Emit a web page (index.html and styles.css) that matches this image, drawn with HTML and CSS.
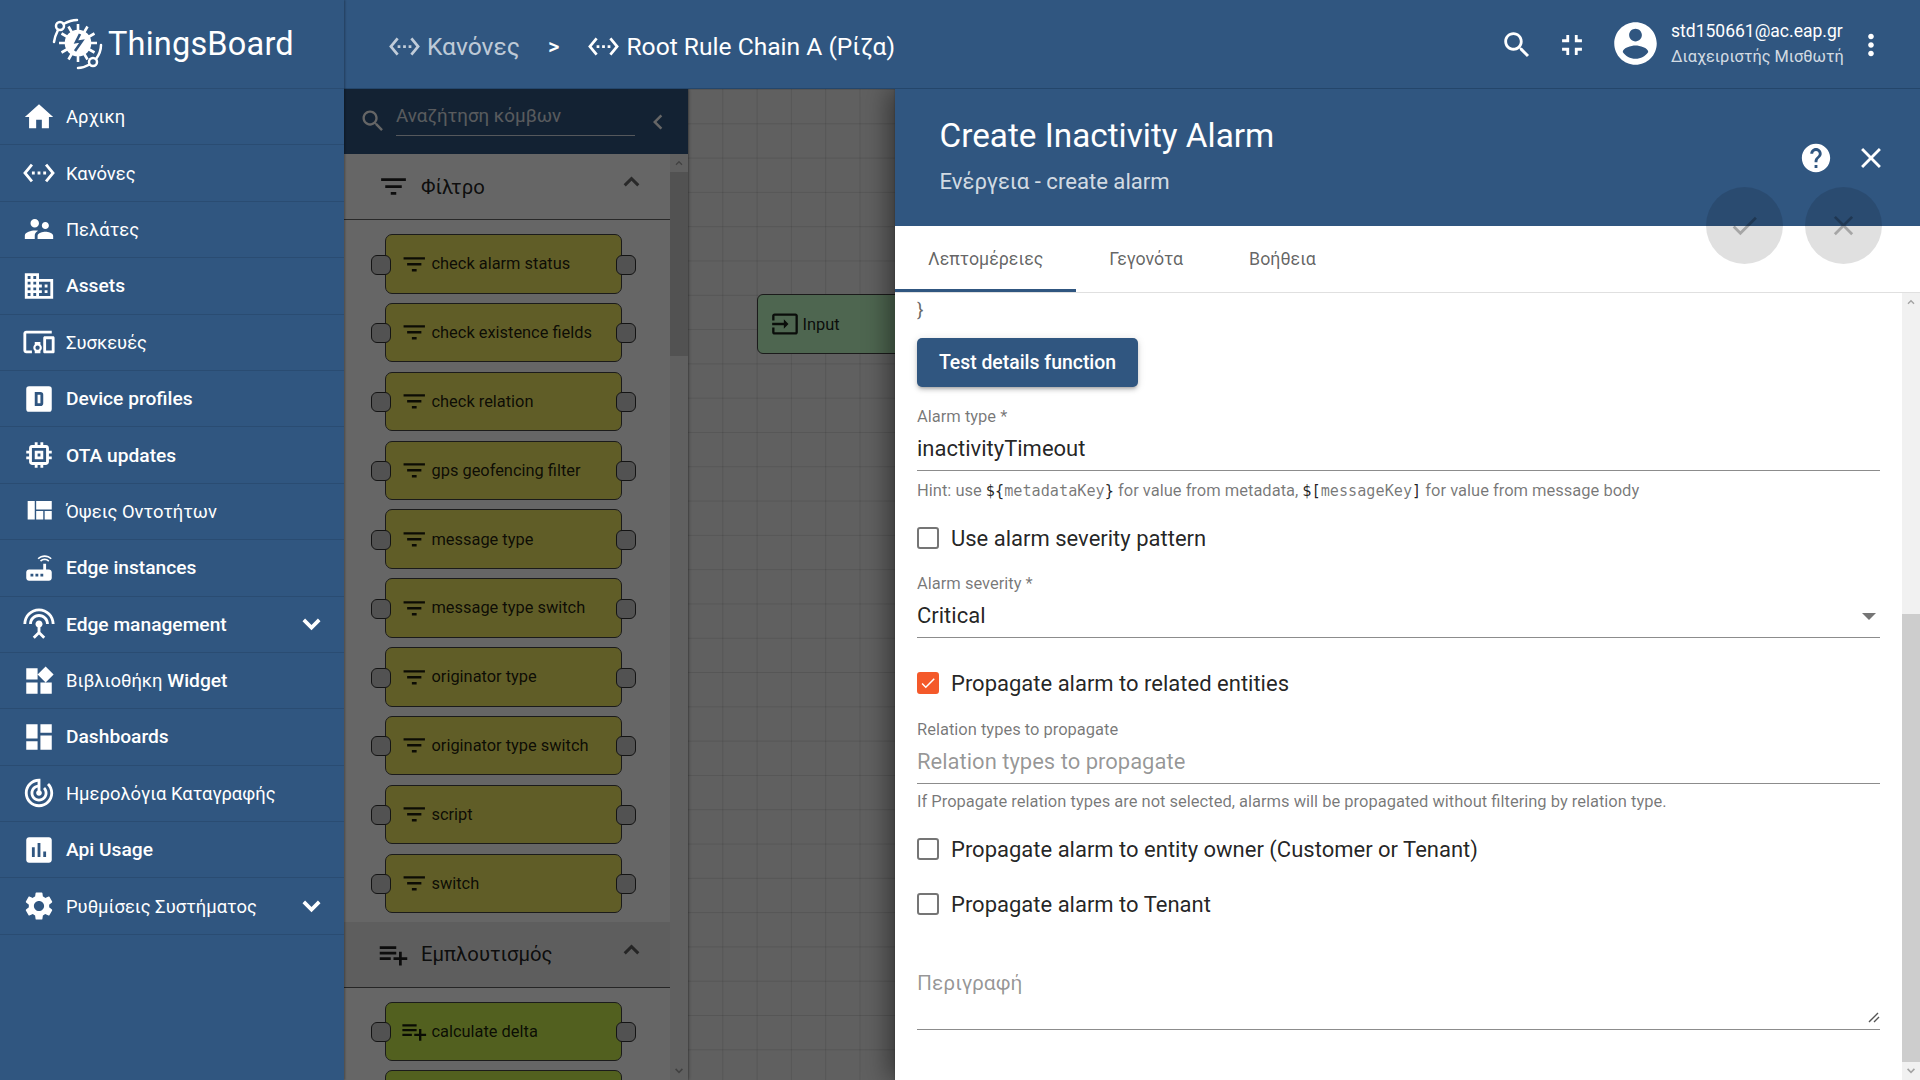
FILE: index.html
```html
<!DOCTYPE html>
<html lang="en">
<head>
  <meta charset="UTF-8">
  <title>ThingsBoard | Root Rule Chain A</title>
  <link rel="stylesheet" href="styles.css">
</head>
<body>
  <svg class="sprite" xmlns="http://www.w3.org/2000/svg">
    <symbol id="i-home" viewBox="0 0 24 24"><path d="M10 20v-6h4v6h5v-8h3L12 3 2 12h3v8z"/></symbol>
    <symbol id="i-search" viewBox="0 0 24 24"><path d="M15.5 14h-.79l-.28-.27C15.41 12.59 16 11.11 16 9.5 16 5.91 13.09 3 9.5 3S3 5.91 3 9.5 5.91 16 9.5 16c1.61 0 3.09-.59 4.23-1.57l.27.28v.79l5 4.99L20.49 19l-4.99-5zm-6 0C7.01 14 5 11.99 5 9.5S7.01 5 9.5 5 14 7.01 14 9.5 11.99 14 9.5 14z"/></symbol>
    <symbol id="i-rules" viewBox="0 0 24 24"><path d="M7.77 6.76L6.23 5.48.82 12l5.41 6.52 1.54-1.28L3.42 12l4.35-5.24zM7 13h2v-2H7v2zm10-2h-2v2h2v-2zm-6 2h2v-2h-2v2zm6.77-7.52l-1.54 1.28L20.58 12l-4.35 5.24 1.54 1.28L23.18 12l-5.41-6.52z"/></symbol>
    <symbol id="i-customers" viewBox="0 0 24 24"><path d="M16.5 12c1.38 0 2.49-1.12 2.49-2.5S17.88 7 16.5 7C15.12 7 14 8.12 14 9.5s1.12 2.5 2.5 2.5zM9 11c1.66 0 2.99-1.34 2.99-3S10.66 5 9 5C7.34 5 6 6.34 6 8s1.34 3 3 3zm7.5 3c-1.83 0-5.5.92-5.5 2.75V19h11v-2.25c0-1.83-3.67-2.75-5.5-2.75zM9 13c-2.33 0-7 1.17-7 3.5V19h7v-2.25c0-.85.33-2.34 2.37-3.47C10.5 13.1 9.66 13 9 13z"/></symbol>
    <symbol id="i-domain" viewBox="0 0 24 24"><path d="M12 7V3H2v18h20V7H12zM6 19H4v-2h2v2zm0-4H4v-2h2v2zm0-4H4V9h2v2zm0-4H4V5h2v2zm4 12H8v-2h2v2zm0-4H8v-2h2v2zm0-4H8V9h2v2zm0-4H8V5h2v2zm10 12h-8v-2h2v-2h-2v-2h2v-2h-2V9h8v10zm-2-8h-2v2h2v-2zm0 4h-2v2h2v-2z"/></symbol>
    <symbol id="i-devices" viewBox="0 0 24 24"><path d="M3 6h18V4H3c-1.1 0-2 .9-2 2v12c0 1.1.9 2 2 2h4v-2H3V6zm10 6H9v1.78c-.61.55-1 1.33-1 2.22s.39 1.67 1 2.22V20h4v-1.78c.61-.55 1-1.34 1-2.22s-.39-1.67-1-2.22V12zm-2 5.5c-.83 0-1.5-.67-1.5-1.5s.67-1.5 1.5-1.5 1.5.67 1.5 1.5-.67 1.5-1.5 1.5zM22 8h-6c-.5 0-1 .5-1 1v10c0 .5.5 1 1 1h6c.5 0 1-.5 1-1V9c0-.5-.5-1-1-1zm-1 10h-4v-8h4v8z"/></symbol>
    <symbol id="i-profile" viewBox="0 0 24 24"><path fill-rule="evenodd" d="M5 3h14a2 2 0 0 1 2 2v14a2 2 0 0 1-2 2H5a2 2 0 0 1-2-2V5a2 2 0 0 1 2-2zm4 4v10h4a2 2 0 0 0 2-2V9a2 2 0 0 0-2-2H9zm2 2h2v6h-2V9z"/></symbol>
    <symbol id="i-memory" viewBox="0 0 24 24"><path d="M15 9H9v6h6V9zm-2 4h-2v-2h2v2zm8-2V9h-2V7c0-1.1-.9-2-2-2h-2V3h-2v2h-2V3H9v2H7c-1.1 0-2 .9-2 2v2H3v2h2v2H3v2h2v2c0 1.1.9 2 2 2h2v2h2v-2h2v2h2v-2h2c1.1 0 2-.9 2-2v-2h2v-2h-2v-2h2zm-4 6H7V7h10v10z"/></symbol>
    <symbol id="i-quilt" viewBox="0 0 24 24"><path d="M10 18h5v-6h-5v6zm-6 0h5V5H4v13zm12 0h5v-6h-5v6zM10 5v6h11V5H10z"/></symbol>
    <symbol id="i-router" viewBox="0 0 24 24"><path d="M20.2 5.9l.8-.8C19.6 3.7 17.8 3 16 3s-3.6.7-5 2.1l.8.8C13 4.8 14.5 4.2 16 4.2s3 .6 4.2 1.7zm-.9.8c-.9-.9-2.1-1.4-3.3-1.4s-2.4.5-3.3 1.4l.8.8c.7-.7 1.6-1 2.5-1 .9 0 1.8.3 2.5 1l.8-.8zM19 13h-2V9h-2v4H5c-1.1 0-2 .9-2 2v4c0 1.1.9 2 2 2h14c1.1 0 2-.9 2-2v-4c0-1.1-.9-2-2-2zM8 18H6v-2h2v2zm3.5 0h-2v-2h2v2zm3.5 0h-2v-2h2v2z"/></symbol>
    <symbol id="i-antenna" viewBox="0 0 24 24"><path d="M12 5c-3.87 0-7 3.13-7 7h2c0-2.76 2.24-5 5-5s5 2.24 5 5h2c0-3.87-3.13-7-7-7zm1 9.29c.88-.39 1.5-1.26 1.5-2.29 0-1.38-1.12-2.5-2.5-2.5S9.5 10.62 9.5 12c0 1.02.62 1.9 1.5 2.29v3.3L7.59 21 9 22.41l3-3 3 3L16.41 21 13 17.59v-3.3zM12 1C5.93 1 1 5.93 1 12h2c0-4.97 4.03-9 9-9s9 4.03 9 9h2c0-6.07-4.93-11-11-11z"/></symbol>
    <symbol id="i-widgets" viewBox="0 0 24 24"><path d="M13 13v8h8v-8h-8zM3 21h8v-8H3v8zM3 3v8h8V3H3zm13.66-1.31L11 7.34 16.66 13l5.66-5.66-5.66-5.65z"/></symbol>
    <symbol id="i-dashboard" viewBox="0 0 24 24"><path d="M3 13h8V3H3v10zm0 8h8v-6H3v6zm10 0h8V11h-8v10zm0-18v6h8V3h-8z"/></symbol>
    <symbol id="i-track" viewBox="0 0 24 24"><path d="M19.07 4.93l-1.41 1.41C19.1 7.79 20 9.79 20 12c0 4.42-3.58 8-8 8s-8-3.58-8-8c0-4.08 3.05-7.44 7-7.93v2.02C8.16 6.57 6 9.03 6 12c0 3.31 2.69 6 6 6s6-2.69 6-6c0-1.66-.67-3.16-1.76-4.24l-1.41 1.41C15.55 9.9 16 10.9 16 12c0 2.21-1.79 4-4 4s-4-1.79-4-4c0-1.86 1.28-3.41 3-3.86v2.14c-.6.35-1 .98-1 1.72 0 1.1.9 2 2 2s2-.9 2-2c0-.74-.4-1.38-1-1.72V2h-1C6.48 2 2 6.48 2 12s4.48 10 10 10 10-4.48 10-10c0-2.76-1.12-5.26-2.93-7.07z"/></symbol>
    <symbol id="i-chart" viewBox="0 0 24 24"><path d="M19 3H5c-1.1 0-2 .9-2 2v14c0 1.1.9 2 2 2h14c1.1 0 2-.9 2-2V5c0-1.1-.9-2-2-2zM9 17H7v-7h2v7zm4 0h-2V7h2v10zm4 0h-2v-4h2v4z"/></symbol>
    <symbol id="i-settings" viewBox="0 0 24 24"><path d="M19.14 12.94c.04-.3.06-.61.06-.94 0-.32-.02-.64-.07-.94l2.03-1.58c.18-.14.23-.41.12-.61l-1.92-3.32c-.12-.22-.37-.29-.59-.22l-2.39.96c-.5-.38-1.03-.7-1.62-.94l-.36-2.54c-.04-.24-.24-.41-.48-.41h-3.84c-.24 0-.43.17-.47.41l-.36 2.54c-.59.24-1.13.57-1.62.94l-2.39-.96c-.22-.08-.47 0-.59.22L2.74 8.87c-.12.21-.08.47.12.61l2.03 1.58c-.05.3-.09.63-.09.94s.02.64.07.94l-2.03 1.58c-.18.14-.23.41-.12.61l1.92 3.32c.12.22.37.29.59.22l2.39-.96c.5.38 1.03.7 1.62.94l.36 2.54c.05.24.24.41.48.41h3.84c.24 0 .44-.17.47-.41l.36-2.54c.59-.24 1.13-.56 1.62-.94l2.39.96c.22.08.47 0 .59-.22l1.92-3.32c.12-.22.07-.47-.12-.61l-2.01-1.58zM12 15.6c-1.98 0-3.6-1.62-3.6-3.6s1.62-3.6 3.6-3.6 3.6 1.62 3.6 3.6-1.62 3.6-3.6 3.6z"/></symbol>
    <symbol id="i-fullscreen-exit" viewBox="0 0 24 24"><path d="M5 16h3v3h2v-5H5v2zm3-8H5v2h5V5H8v3zm6 11h2v-3h3v-2h-5v5zm2-11V5h-2v5h5V8h-3z"/></symbol>
    <symbol id="i-account" viewBox="0 0 24 24"><path d="M12 2C6.48 2 2 6.48 2 12s4.48 10 10 10 10-4.48 10-10S17.52 2 12 2zm0 3c1.66 0 3 1.34 3 3s-1.34 3-3 3-3-1.34-3-3 1.34-3 3-3zm0 14.2c-2.5 0-4.71-1.28-6-3.22.03-1.99 4-3.08 6-3.08 1.99 0 5.97 1.09 6 3.08-1.29 1.94-3.5 3.22-6 3.22z"/></symbol>
    <symbol id="i-more" viewBox="0 0 24 24"><path d="M12 8c1.1 0 2-.9 2-2s-.9-2-2-2-2 .9-2 2 .9 2 2 2zm0 2c-1.1 0-2 .9-2 2s.9 2 2 2 2-.9 2-2-.9-2-2-2zm0 6c-1.1 0-2 .9-2 2s.9 2 2 2 2-.9 2-2-.9-2-2-2z"/></symbol>
    <symbol id="i-help" viewBox="0 0 24 24"><path d="M12 2C6.48 2 2 6.48 2 12s4.48 10 10 10 10-4.48 10-10S17.52 2 12 2zm1 17h-2v-2h2v2zm2.07-7.75l-.9.92C13.45 12.9 13 13.5 13 15h-2v-.5c0-1.1.45-2.1 1.17-2.83l1.24-1.26c.37-.36.59-.86.59-1.41 0-1.1-.9-2-2-2s-2 .9-2 2H8c0-2.21 1.79-4 4-4s4 1.79 4 4c0 .88-.36 1.68-.93 2.25z"/></symbol>
    <symbol id="i-close" viewBox="0 0 24 24"><path d="M19 6.41L17.59 5 12 10.59 6.41 5 5 6.41 10.59 12 5 17.59 6.41 19 12 13.41 17.59 19 19 17.59 13.41 12z"/></symbol>
    <symbol id="i-check" viewBox="0 0 24 24"><path d="M9 16.17L4.83 12l-1.42 1.41L9 19 21 7l-1.41-1.41z"/></symbol>
    <symbol id="i-filter" viewBox="0 0 24 24"><path d="M10 18h4v-2h-4v2zM3 6v2h18V6H3zm3 7h12v-2H6v2z"/></symbol>
    <symbol id="i-playlist" viewBox="0 0 24 24"><path d="M14 10H2v2h12v-2zm0-4H2v2h12V6zm4 8v-4h-2v4h-4v2h4v4h2v-4h4v-2h-4zM2 16h8v-2H2v2z"/></symbol>
    <symbol id="i-input" viewBox="0 0 24 24"><path d="M21 3.01H3c-1.1 0-2 .9-2 2V9h2V4.99h18v14.03H3V15H1v4.01c0 1.1.9 1.98 2 1.98h18c1.1 0 2-.88 2-1.98v-14c0-1.11-.9-2-2-2zM11 16l4-4-4-4v3H1v2h10v3z"/></symbol>
    <symbol id="i-less" viewBox="0 0 24 24"><path d="M12 7.5l-7 7 1.9 1.9 5.1-5.1 5.1 5.1 1.9-1.9z"/></symbol>
    <symbol id="i-down" viewBox="0 0 24 24"><path d="M12 17l-8-8 2.3-2.3 5.7 5.7 5.7-5.7L20 9z"/></symbol>
    <symbol id="i-back" viewBox="0 0 24 24"><path d="M15.41 7.41L14 6l-6 6 6 6 1.41-1.41L10.83 12z"/></symbol>
  </svg>

  <div class="app">
    <aside class="sidenav">
      <div class="logo">
        <svg class="logo-mark" viewBox="0 0 60 60">
          <g class="logo-lines">
            <circle cx="12" cy="12" r="4"/>
            <path d="M15.5 10C20 7.500 24 6 29 6M10 16C8 20 6.500 24 6 28"/>
            <circle cx="45" cy="48" r="4"/>
            <path d="M41.500 50.500C38 52.500 34 54 30 54M48 45C51 41 53 36 53 31"/>
          </g>
          <g class="logo-gear">
            <circle cx="30" cy="29" r="12"/>
            <path d="M30 10v38M11 29h38M20.500 12.500l19 33M39.500 12.500l-19 33M13.500 19.500l33 19M46.500 19.500l-33 19"/>
          </g>
          <path class="logo-bolt" d="M32 20l-4 8 6-1-7 10"/>
        </svg>
        <span class="logo-text">ThingsBoard</span>
      </div>
      <nav>
        <a class="nav-item"><svg class="nav-icon"><use href="#i-home"/></svg><span class="gr">Αρχικη</span></a>
        <a class="nav-item"><svg class="nav-icon"><use href="#i-rules"/></svg><span class="gr">Κανόνες</span></a>
        <a class="nav-item"><svg class="nav-icon"><use href="#i-customers"/></svg><span class="gr">Πελάτες</span></a>
        <a class="nav-item"><svg class="nav-icon"><use href="#i-domain"/></svg><span>Assets</span></a>
        <a class="nav-item"><svg class="nav-icon"><use href="#i-devices"/></svg><span class="gr">Συσκευές</span></a>
        <a class="nav-item"><svg class="nav-icon"><use href="#i-profile"/></svg><span>Device profiles</span></a>
        <a class="nav-item"><svg class="nav-icon"><use href="#i-memory"/></svg><span>OTA updates</span></a>
        <a class="nav-item"><svg class="nav-icon"><use href="#i-quilt"/></svg><span class="gr">Όψεις Οντοτήτων</span></a>
        <a class="nav-item"><svg class="nav-icon"><use href="#i-router"/></svg><span>Edge instances</span></a>
        <a class="nav-item"><svg class="nav-icon"><use href="#i-antenna"/></svg><span>Edge management</span><svg class="nav-arrow"><use href="#i-down"/></svg></a>
        <a class="nav-item"><svg class="nav-icon"><use href="#i-widgets"/></svg><span><span class="gr">Βιβλιοθήκη</span> Widget</span></a>
        <a class="nav-item"><svg class="nav-icon"><use href="#i-dashboard"/></svg><span>Dashboards</span></a>
        <a class="nav-item"><svg class="nav-icon"><use href="#i-track"/></svg><span class="gr">Ημερολόγια Καταγραφής</span></a>
        <a class="nav-item"><svg class="nav-icon"><use href="#i-chart"/></svg><span>Api Usage</span></a>
        <a class="nav-item"><svg class="nav-icon"><use href="#i-settings"/></svg><span class="gr">Ρυθμίσεις Συστήματος</span><svg class="nav-arrow"><use href="#i-down"/></svg></a>
      </nav>
    </aside>

    <div class="main">
      <header class="toolbar">
        <div class="crumbs">
          <svg class="crumb-icon crumb-dim"><use href="#i-rules"/></svg>
          <span class="crumb-text crumb-dim">Κανόνες</span>
          <span class="crumb-sep">&gt;</span>
          <svg class="crumb-icon"><use href="#i-rules"/></svg>
          <span class="crumb-text">Root Rule Chain A (Ρίζα)</span>
        </div>
        <div class="toolbar-actions">
          <svg class="tool-icon"><use href="#i-search"/></svg>
          <svg class="tool-icon tool-fullscreen"><use href="#i-fullscreen-exit"/></svg>
          <svg class="avatar"><use href="#i-account"/></svg>
          <div class="user">
            <div class="user-name">std150661@ac.eap.gr</div>
            <div class="user-role">Διαχειριστής Μισθωτή</div>
          </div>
          <svg class="tool-icon"><use href="#i-more"/></svg>
        </div>
      </header>

      <div class="workspace">
        <section class="library">
          <div class="lib-search">
            <svg class="lib-search-icon"><use href="#i-search"/></svg>
            <div class="lib-search-input">Αναζήτηση κόμβων</div>
            <svg class="lib-back"><use href="#i-back"/></svg>
          </div>
          <div class="lib-body">
            <div class="lib-list">
              <div class="lib-head">
                <svg class="lib-head-icon"><use href="#i-filter"/></svg>
                <span class="lib-head-title">Φίλτρο</span>
                <svg class="lib-head-arrow"><use href="#i-less"/></svg>
              </div>
              <div class="lib-nodes">
                <div class="node node-filter"><i class="port port-l"></i><svg class="node-icon"><use href="#i-filter"/></svg><span>check alarm status</span><i class="port port-r"></i></div>
                <div class="node node-filter"><i class="port port-l"></i><svg class="node-icon"><use href="#i-filter"/></svg><span>check existence fields</span><i class="port port-r"></i></div>
                <div class="node node-filter"><i class="port port-l"></i><svg class="node-icon"><use href="#i-filter"/></svg><span>check relation</span><i class="port port-r"></i></div>
                <div class="node node-filter"><i class="port port-l"></i><svg class="node-icon"><use href="#i-filter"/></svg><span>gps geofencing filter</span><i class="port port-r"></i></div>
                <div class="node node-filter"><i class="port port-l"></i><svg class="node-icon"><use href="#i-filter"/></svg><span>message type</span><i class="port port-r"></i></div>
                <div class="node node-filter"><i class="port port-l"></i><svg class="node-icon"><use href="#i-filter"/></svg><span>message type switch</span><i class="port port-r"></i></div>
                <div class="node node-filter"><i class="port port-l"></i><svg class="node-icon"><use href="#i-filter"/></svg><span>originator type</span><i class="port port-r"></i></div>
                <div class="node node-filter"><i class="port port-l"></i><svg class="node-icon"><use href="#i-filter"/></svg><span>originator type switch</span><i class="port port-r"></i></div>
                <div class="node node-filter"><i class="port port-l"></i><svg class="node-icon"><use href="#i-filter"/></svg><span>script</span><i class="port port-r"></i></div>
                <div class="node node-filter"><i class="port port-l"></i><svg class="node-icon"><use href="#i-filter"/></svg><span>switch</span><i class="port port-r"></i></div>
              </div>
              <div class="lib-head lib-head-hover">
                <svg class="lib-head-icon"><use href="#i-playlist"/></svg>
                <span class="lib-head-title">Εμπλουτισμός</span>
                <svg class="lib-head-arrow"><use href="#i-less"/></svg>
              </div>
              <div class="lib-nodes">
                <div class="node node-enrich"><i class="port port-l"></i><svg class="node-icon"><use href="#i-playlist"/></svg><span>calculate delta</span><i class="port port-r"></i></div>
                <div class="node node-enrich"><i class="port port-l"></i><i class="port port-r"></i></div>
              </div>
            </div>
            <div class="scrollbar scrollbar-lib">
              <svg class="scroll-btn"><use href="#i-less"/></svg>
              <div class="scroll-thumb"></div>
              <div class="scroll-fill"></div>
              <svg class="scroll-btn"><use href="#i-down"/></svg>
            </div>
          </div>
        </section>

        <section class="canvas">
          <div class="canvas-node">
            <svg class="canvas-node-icon"><use href="#i-input"/></svg>
            <span>Input</span>
          </div>
        </section>

        <div class="backdrop"></div>

        <aside class="drawer">
          <div class="drawer-head">
            <h1 class="drawer-title">Create Inactivity Alarm</h1>
            <div class="drawer-sub">Ενέργεια - create alarm</div>
            <div class="drawer-tools">
              <svg class="drawer-tool"><use href="#i-help"/></svg>
              <svg class="drawer-tool"><use href="#i-close"/></svg>
            </div>
            <div class="fabs">
              <div class="fab"><svg><use href="#i-check"/></svg></div>
              <div class="fab"><svg><use href="#i-close"/></svg></div>
            </div>
          </div>
          <div class="tabs">
            <div class="tab tab-active">Λεπτομέρειες</div>
            <div class="tab">Γεγονότα</div>
            <div class="tab">Βοήθεια</div>
          </div>
          <div class="drawer-body">
            <div class="form">
              <div class="code-end">}</div>
              <button class="btn-test">Test details function</button>

              <div class="field-label mt-19">Alarm type *</div>
              <div class="field-value">inactivityTimeout</div>
              <div class="hint mt-10">Hint: use <code class="tok">$<span class="tok-key">{</span><span class="tok-var">metadataKey</span>}</code> for value from metadata, <code class="tok">$[<span class="tok-var">messageKey</span>]</code> for value from message body</div>

              <label class="check mt-26"><i class="box"></i>Use alarm severity pattern</label>

              <div class="field-label mt-24">Alarm severity *</div>
              <div class="field-value field-select">Critical<i class="select-arrow"></i></div>

              <label class="check mt-34"><i class="box box-on"><svg><use href="#i-check"/></svg></i>Propagate alarm to related entities</label>

              <div class="field-label mt-25">Relation types to propagate</div>
              <div class="field-value field-empty">Relation types to propagate</div>
              <div class="hint mt-8">If Propagate relation types are not selected, alarms will be propagated without filtering by relation type.</div>

              <label class="check mt-26"><i class="box"></i>Propagate alarm to entity owner (Customer or Tenant)</label>
              <label class="check mt-33"><i class="box"></i>Propagate alarm to Tenant</label>

              <div class="field-area">
                Περιγραφή
                <svg class="resize-grip" viewBox="0 0 12 12"><path d="M1 11L10 2M6 11l5-5"/></svg>
              </div>
            </div>
            <div class="scrollbar scrollbar-form">
              <svg class="scroll-btn"><use href="#i-less"/></svg>
              <div class="scroll-fill"></div>
              <div class="scroll-thumb"></div>
              <svg class="scroll-btn"><use href="#i-down"/></svg>
            </div>
          </div>
        </aside>
      </div>
    </div>
  </div>
</body>
</html>
```

FILE: styles.css
```css
* {
  margin: 0;
  padding: 0;
  box-sizing: border-box;
}
html, body {
  height: 100%;
  overflow: hidden;
}
body {
  font-family: Roboto, "Noto Sans", sans-serif;
  font-size: 17.5px;
  color: rgba(0,0,0,0.87);
  background: #fff;
}
svg {
  fill: currentColor;
  display: block;
  flex: none;
}
.sprite {
  display: none;
}
.app {
  display: flex;
  height: 1080px;
}

/* left menu */
.sidenav {
  width: 344px;
  flex: none;
  background: #305680;
  color: #fff;
  box-shadow: 1px 0 2px rgba(0,0,0,0.3);
  position: relative;
  z-index: 3;
}
.logo {
  height: 89px;
  display: flex;
  align-items: center;
  padding-left: 48px;
  border-bottom: 1px solid #2a4c72;
}
.logo-mark {
  width: 60px;
  height: 60px;
  fill: none;
}
.logo-lines {
  stroke: #fff;
  stroke-width: 2.5;
  stroke-linecap: round;
}
.logo-gear {
  stroke: #fff;
  fill: #fff;
  stroke-width: 2.6;
}
.logo-bolt {
  stroke: #305680;
  stroke-width: 2.6;
}
.logo-text {
  font-size: 32.5px;
  font-weight: 400;
  letter-spacing: 0.2px;
}
.nav-item {
  height: 56.4px;
  display: flex;
  align-items: center;
  padding-left: 21.5px;
  padding-right: 19.5px;
  font-size: 19.2px;
  font-weight: 500;
  border-bottom: 1px solid #2a4c72;
}
.gr {
  font-weight: 400;
  font-size: 18.4px;
}
.nav-icon {
  width: 34px;
  height: 34px;
  margin-right: 10.5px;
}
.nav-arrow {
  width: 27px;
  height: 27px;
  margin-left: auto;
}

.main {
  flex: 1;
  display: flex;
  flex-direction: column;
  min-width: 0;
}

/* top bar */
.toolbar {
  height: 89px;
  flex: none;
  background: #305680;
  color: #fff;
  display: flex;
  align-items: center;
  justify-content: space-between;
  border-bottom: 1px solid #24466b;
  padding-left: 44px;
  padding-right: 32px;
}
.crumbs {
  display: flex;
  align-items: center;
  font-size: 24.6px;
  margin-top: 4px;
}
.crumb-icon {
  width: 33px;
  height: 33px;
  margin-right: 6px;
}
.crumb-dim {
  color: rgba(255,255,255,0.7);
}
.crumb-sep {
  margin: 0 28px 0 28px;
  font-size: 22px;
  font-weight: 500;
}
.toolbar-actions {
  display: flex;
  align-items: center;
}
.tool-icon {
  width: 34px;
  height: 34px;
  margin-top: 2px;
}
.tool-fullscreen {
  margin-left: 21.5px;
}
.avatar {
  width: 51px;
  height: 51px;
  margin-left: 20.5px;
  margin-top: -2px;
}
.user {
  margin-left: 10.5px;
  font-size: 17.5px;
  line-height: 26px;
  width: 183px;
  white-space: nowrap;
}
.user-role {
  font-size: 16.35px;
  color: rgba(255,255,255,0.8);
}

/* rule chain area */
.workspace {
  flex: 1;
  position: relative;
  display: flex;
  min-height: 0;
  overflow: hidden;
}
.library {
  width: 344px;
  flex: none;
  display: flex;
  flex-direction: column;
  background: #fff;
  box-shadow: 1px 0 3px rgba(0,0,0,0.3);
  z-index: 1;
}
.lib-search {
  height: 65px;
  flex: none;
  background: #305680;
  color: #fff;
  display: flex;
  align-items: center;
  padding-left: 15px;
}
.lib-search-icon {
  width: 28px;
  height: 28px;
  margin-right: 9px;
  margin-top: -2px;
}
.lib-search-input {
  width: 239px;
  height: 40px;
  margin-top: -11px;
  font-size: 18.75px;
  line-height: 41px;
  color: rgba(255,255,255,0.85);
  border-bottom: 1px solid rgba(255,255,255,0.8);
}
.lib-back {
  width: 30px;
  height: 30px;
  margin-left: 7.5px;
}
.lib-body {
  flex: 1;
  display: flex;
  min-height: 0;
}
.lib-list {
  flex: 1;
  overflow: hidden;
  background: #fff;
}
.lib-head {
  height: 66px;
  display: flex;
  align-items: center;
  padding-left: 33px;
  border-bottom: 1px solid rgba(0,0,0,0.6);
  position: relative;
}
.lib-head-hover {
  background: rgba(0,0,0,0.08);
}
.lib-head-icon {
  width: 33px;
  height: 33px;
  margin-right: 11px;
}
.lib-head-title {
  font-size: 20.3px;
}
.lib-head-arrow {
  width: 27px;
  height: 27px;
  position: absolute;
  left: 273.5px;
  top: 14px;
  color: rgba(0,0,0,0.6);
}
.lib-nodes {
  padding: 14px 0 8.5px 41px;
  display: flex;
  flex-direction: column;
  gap: 9.35px;
}
.node {
  width: 237px;
  height: 59.5px;
  flex: none;
  border: 1px solid #444;
  border-radius: 7px;
  display: flex;
  align-items: center;
  position: relative;
  padding-left: 13.5px;
  font-size: 16.4px;
}
.node-filter {
  background: #f1e861;
}
.node-enrich {
  background: #cdf14e;
}
.node-icon {
  width: 28.5px;
  height: 28.5px;
  margin-right: 3.5px;
}
.port {
  position: absolute;
  top: 19.5px;
  width: 20px;
  height: 20px;
  background: #ccc;
  border: 1px solid #333;
  border-radius: 6px;
}
.port-l {
  left: -15px;
}
.port-r {
  right: -15px;
}
.scrollbar {
  width: 18px;
  flex: none;
  display: flex;
  flex-direction: column;
  background: #f1f1f1;
  color: #a3a3a3;
}
.scroll-btn {
  width: 18px;
  height: 18px;
  padding: 3px;
  flex: none;
}
.scroll-fill {
  flex: 1;
}
.scroll-thumb {
  background: #cdcdcd;
  flex: none;
}
.scrollbar-lib .scroll-thumb {
  height: 184px;
}
.scrollbar-form .scroll-thumb {
  height: 448px;
}
.canvas {
  flex: 1;
  background-color: #f0f0f0;
  background-image:
    linear-gradient(to right, rgba(0,0,0,0.1) 1px, transparent 1px),
    linear-gradient(to bottom, rgba(0,0,0,0.1) 1px, transparent 1px);
  background-size: 34.3px 34.3px;
  position: relative;
}
.canvas-node {
  position: absolute;
  left: 68.5px;
  top: 205px;
  width: 180px;
  height: 60px;
  background: #c4ffc8;
  border: 1px solid #444;
  border-radius: 6px;
  display: flex;
  align-items: center;
  padding-left: 13px;
  font-size: 16.4px;
}
.canvas-node-icon {
  width: 28px;
  height: 28px;
  margin-right: 4px;
}
.backdrop {
  position: absolute;
  inset: 0;
  background: rgba(0,0,0,0.6);
  z-index: 2;
}

/* details drawer */
.drawer {
  position: absolute;
  top: 0;
  right: 0;
  bottom: 0;
  width: 1025px;
  background: #fff;
  display: flex;
  flex-direction: column;
  z-index: 3;
  box-shadow: -6px 0 24px rgba(0,0,0,0.45);
}
.drawer-head {
  height: 137px;
  flex: none;
  background: #305680;
  color: #fff;
  position: relative;
  padding: 28px 0 0 44.5px;
}
.drawer-title {
  font-size: 33.3px;
  font-weight: 400;
  line-height: 38px;
}
.drawer-sub {
  font-size: 22.1px;
  line-height: 28px;
  margin-top: 12px;
  color: rgba(255,255,255,0.8);
}
.drawer-tools {
  position: absolute;
  right: 32px;
  top: 52px;
  display: flex;
  align-items: center;
  gap: 21px;
}
.drawer-tool {
  width: 34px;
  height: 34px;
}
.fabs {
  position: absolute;
  right: 38px;
  top: 98px;
  display: flex;
  gap: 22px;
  z-index: 1;
}
.fab {
  width: 77px;
  height: 77px;
  border-radius: 50%;
  background: rgba(0,0,0,0.12);
  color: rgba(0,0,0,0.26);
  display: flex;
  align-items: center;
  justify-content: center;
}
.fab svg {
  width: 33px;
  height: 33px;
}
.tabs {
  height: 67px;
  flex: none;
  display: flex;
  border-bottom: 1px solid #e0e0e0;
  font-size: 17.8px;
  color: rgba(0,0,0,0.62);
}
.tab {
  padding: 0 33px;
  line-height: 66px;
  height: 66px;
}
.tab-active {
  border-bottom: 3px solid #305680;
}
.drawer-body {
  flex: 1;
  display: flex;
  min-height: 0;
}
.form {
  flex: 1;
  padding: 5px 22px 0 22px;
  overflow: hidden;
  min-width: 0;
}
.code-end {
  font-size: 19px;
  line-height: 24px;
  color: rgba(0,0,0,0.6);
}
.btn-test {
  display: block;
  margin-top: 16px;
  width: 221px;
  height: 49px;
  border: none;
  border-radius: 5px;
  background: #305680;
  color: #fff;
  font: 500 19.4px Roboto, sans-serif;
  box-shadow: 0 3px 3px -2px rgba(0,0,0,0.2), 0 3px 4px rgba(0,0,0,0.14), 0 1px 8px rgba(0,0,0,0.12);
}
.mt-8 { margin-top: 8px; }
.mt-10 { margin-top: 10px; }
.mt-19 { margin-top: 19px; }
.mt-24 { margin-top: 24px; }
.mt-25 { margin-top: 25px; }
.mt-26 { margin-top: 26px; }
.mt-33 { margin-top: 33px; }
.mt-34 { margin-top: 34px; }
.field-label {
  font-size: 16.5px;
  line-height: 22px;
  color: rgba(0,0,0,0.54);
}
.field-value {
  margin-top: 6px;
  font-size: 22px;
  line-height: 30px;
  padding-bottom: 8px;
  border-bottom: 1px solid #8c8c8c;
  position: relative;
  box-sizing: content-box;
  height: 28px;
}
.field-empty {
  color: rgba(0,0,0,0.42);
}
.select-arrow {
  position: absolute;
  right: 4px;
  top: 12px;
  border-left: 7px solid transparent;
  border-right: 7px solid transparent;
  border-top: 7px solid #757575;
}
.hint {
  font-size: 16.5px;
  line-height: 20px;
  color: rgba(0,0,0,0.54);
}
.tok {
  font-family: "DejaVu Sans Mono", monospace;
  font-size: 15.2px;
  color: rgba(0,0,0,0.87);
}
.tok-var {
  color: rgba(0,0,0,0.54);
}
.check {
  display: flex;
  align-items: center;
  height: 22px;
  font-size: 22px;
}
.box {
  width: 22px;
  height: 22px;
  flex: none;
  border: 2px solid rgba(0,0,0,0.54);
  border-radius: 3px;
  margin-right: 12px;
}
.box-on {
  background: #f4592a;
  border-color: #f4592a;
  color: #fff;
}
.box-on svg {
  width: 18px;
  height: 18px;
}
.field-area {
  margin-top: 54px;
  height: 61px;
  font-size: 21px;
  line-height: 28px;
  color: rgba(0,0,0,0.42);
  border-bottom: 1px solid #8c8c8c;
  position: relative;
}
.resize-grip {
  position: absolute;
  right: 0;
  bottom: 6px;
  width: 12px;
  height: 12px;
  fill: none;
  stroke: #555;
  stroke-width: 1.4;
}
```
